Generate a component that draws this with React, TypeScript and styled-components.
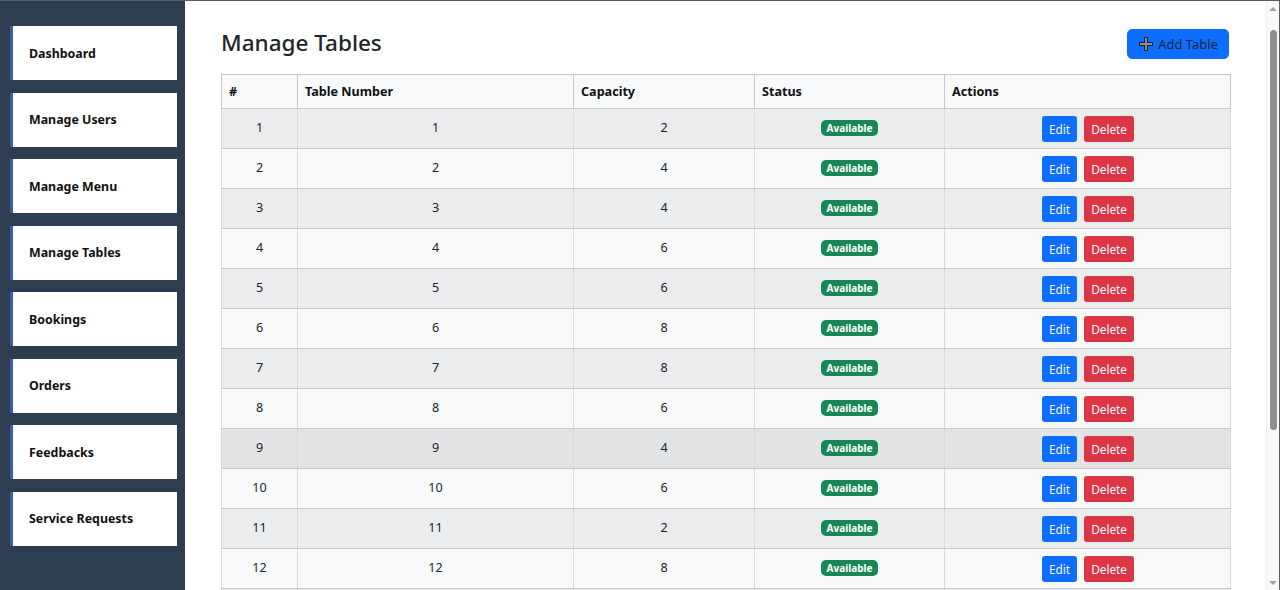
import React from "react";
import styled, { createGlobalStyle } from "styled-components";

const Global = createGlobalStyle`
  html, body { margin: 0; padding: 0; height: 100%; overflow: hidden; }
  body { font-family: "Segoe UI", "Noto Sans", "Open Sans", sans-serif; color: #212529; background: #fff; }
  * { box-sizing: border-box; }
`;

const Frame = styled.div`
  display: flex;
  height: 100vh;
  border-top: 1px solid #5c5c5c;
  border-right: 1px solid #5c5c5c;
`;

const Sidebar = styled.nav`
  width: 185px;
  flex: 0 0 185px;
  background: #2c3e50;
  padding: 25px 8px 0 10px;
  display: flex;
  flex-direction: column;
  gap: 12.5px;
`;

const NavItem = styled.a`
  display: flex;
  align-items: center;
  height: 54px;
  background: #fff;
  border-left: 3px solid #3d5bb0;
  padding-left: 16px;
  font-size: 12.4px;
  font-weight: 700;
  color: #111;
  text-decoration: none;
`;

const Main = styled.main`
  flex: 1;
  height: 100%;
  overflow: hidden;
  padding: 26px 35px 40px 36px;
`;

const ScrollTrack = styled.div`
  flex: 0 0 13px;
  width: 13px;
  height: 100%;
  background: #fafafa;
  border-left: 1px solid #f0f0f0;
  display: flex;
  flex-direction: column;
  align-items: center;
  padding: 6px 0 5px;
`;

const Arrow = styled.div<{ $dir: "up" | "down" }>`
  width: 0;
  height: 0;
  border-left: 4px solid transparent;
  border-right: 4px solid transparent;
  ${(p) =>
    p.$dir === "up"
      ? "border-bottom: 4px solid #a3a3a3;"
      : "border-top: 4px solid #a3a3a3;"}
`;

const Thumb = styled.div`
  width: 7px;
  height: 400px;
  margin-top: 19px;
  margin-bottom: auto;
  background: #8f8f8f;
  border-radius: 4px;
`;

const Header = styled.div`
  display: flex;
  justify-content: space-between;
  align-items: center;
  height: 30px;
  margin-bottom: 17px;
  padding-right: 2px;
`;

const Title = styled.h2`
  margin: 0;
  font-size: 22.5px;
  font-weight: 500;
  line-height: 1.2;
  color: #212529;
`;

const AddButton = styled.button`
  display: inline-flex;
  align-items: center;
  gap: 4px;
  height: 30px;
  margin-top: 4px;
  padding: 0 10px 0 10px;
  background: #0d6efd;
  border: 1px solid #0d6efd;
  border-radius: 5px;
  color: #1b2440;
  font-family: inherit;
  font-size: 13px;
`;

const Table = styled.table`
  width: 100%;
  table-layout: fixed;
  border-collapse: collapse;
  font-size: 12.6px;
  border: 1px solid #c8c9ca;
`;

const Th = styled.th`
  height: 34px;
  padding: 0 7px;
  text-align: left;
  font-weight: 700;
  background: #f8f9fa;
  border: 1px solid #c8c9ca;
  color: #111;
`;

const Tr = styled.tr<{ $tone: "odd" | "even" | "hover" }>`
  background: ${(p) => (p.$tone === "odd" ? "#ebecee" : p.$tone === "hover" ? "#e3e4e5" : "#f8f9fa")};
`;

const Td = styled.td`
  height: 40px;
  padding: 0 7px 2px;
  text-align: center;
  border-top: 1px solid #c8c9ca;
  border-bottom: 1px solid #c8c9ca;
  border-left: 1px solid #d8d9da;
  border-right: 1px solid #d8d9da;
  color: #212529;
`;

const Badge = styled.span`
  display: inline-block;
  padding: 3px 6px 3px;
  background: #198754;
  color: #fff;
  font-size: 10px;
  font-weight: 700;
  line-height: 1;
  border-radius: 5px;
`;

const Actions = styled.div`
  display: flex;
  justify-content: center;
  gap: 7px;
  padding-left: 1px;
  padding-top: 2px;
`;

const SmallBtn = styled.button<{ $variant: "edit" | "delete" }>`
  height: 26px;
  padding: 0 7px;
  border: none;
  border-radius: 3px;
  font-family: inherit;
  font-size: 11.8px;
  color: #f3f5ff;
  background: ${(p) => (p.$variant === "edit" ? "#0d6efd" : "#dc3545")};
`;

const PlusIcon = () => (
  <svg width="16" height="16" viewBox="0 0 16 16">
    <path
      d="M6.5 1.5h3v5h5v3h-5v5h-3v-5h-5v-3h5z"
      fill="#8a8f99"
      stroke="#1b2030"
      strokeWidth="1.1"
      strokeLinejoin="round"
    />
  </svg>
);

const nav = [
  "Dashboard",
  "Manage Users",
  "Manage Menu",
  "Manage Tables",
  "Bookings",
  "Orders",
  "Feedbacks",
  "Service Requests",
];

const caps = [2, 4, 4, 6, 6, 8, 8, 6, 4, 6, 2, 8, 4, 6, 2, 4, 8, 6];

export default function App() {
  return (
    <>
      <Global />
      <Frame>
        <Sidebar>
          {nav.map((n) => (
            <NavItem key={n} href="#">
              {n}
            </NavItem>
          ))}
        </Sidebar>
        <Main>
          <Header>
            <Title>Manage Tables</Title>
            <AddButton>
              <PlusIcon />
              Add Table
            </AddButton>
          </Header>
          <Table>
            <colgroup>
              <col style={{ width: 76 }} />
              <col style={{ width: 276 }} />
              <col style={{ width: 181 }} />
              <col style={{ width: 190 }} />
              <col />
            </colgroup>
            <thead>
              <tr>
                <Th>#</Th>
                <Th>Table Number</Th>
                <Th>Capacity</Th>
                <Th>Status</Th>
                <Th>Actions</Th>
              </tr>
            </thead>
            <tbody>
              {caps.map((c, i) => (
                <Tr key={i} $tone={i === 8 ? "hover" : i % 2 === 0 ? "odd" : "even"}>
                  <Td>{i + 1}</Td>
                  <Td>{i + 1}</Td>
                  <Td>{c}</Td>
                  <Td>
                    <Badge>Available</Badge>
                  </Td>
                  <Td>
                    <Actions>
                      <SmallBtn $variant="edit">Edit</SmallBtn>
                      <SmallBtn $variant="delete">Delete</SmallBtn>
                    </Actions>
                  </Td>
                </Tr>
              ))}
            </tbody>
          </Table>
        </Main>
        <ScrollTrack aria-hidden>
          <Arrow $dir="up" />
          <Thumb />
          <Arrow $dir="down" />
        </ScrollTrack>
      </Frame>
    </>
  );
}
